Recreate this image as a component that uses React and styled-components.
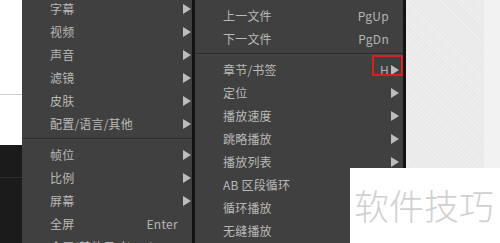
import React from "react";
import styled, { createGlobalStyle } from "styled-components";

const Global = createGlobalStyle`
  html, body { margin: 0; padding: 0; background: #ffffff; }
  body { font-family: "Noto Sans CJK SC", "Noto Sans", sans-serif; }
`;

const Screen = styled.div`
  position: relative;
  display: flex;
  width: 500px;
  height: 243px;
  overflow: hidden;
`;

const LeftStrip = styled.div`
  width: 22px;
  flex: none;
  display: flex;
  flex-direction: column;
`;

const StripBlock = styled.div`
  height: ${(p) => p.$h}px;
  flex: ${(p) => (p.$grow ? 1 : "none")};
  background: ${(p) => p.$bg};
  border-bottom: ${(p) => (p.$line ? `1px solid ${p.$line}` : "none")};
`;

const Menu = styled.div`
  flex: none;
  width: ${(p) => p.$w}px;
  background: #404040;
  border-right: 3px solid #141414;
  display: flex;
  flex-direction: column;
  padding-top: ${(p) => p.$pt}px;
  margin-top: ${(p) => p.$mt}px;
  height: 260px;
`;

const Row = styled.div`
  position: relative;
  height: 23px;
  flex: none;
  display: grid;
  grid-template-columns: 1fr auto 14px;
  align-items: center;
  padding-left: 28px;
  color: #b9b9b9;
  font-size: 12px;
  line-height: 23px;
  white-space: nowrap;
`;

const Label = styled.span`
  letter-spacing: 0.2px;
`;

const Shortcut = styled.span`
  color: #b4b4b4;
  font-size: 12px;
  letter-spacing: 0.3px;
`;

const ArrowCell = styled.span`
  display: flex;
  justify-content: flex-end;
  align-items: center;
  padding-right: ${(p) => p.$pr}px;
`;

const Separator = styled.div`
  height: 8px;
  flex: none;
  box-sizing: border-box;
  padding-top: ${(p) => p.$off}px;
  &::before {
    content: "";
    display: block;
    height: 1px;
    background: #2a2a2a;
    border-bottom: 1px solid #474747;
  }
`;

const Annotation = styled.div`
  position: absolute;
  right: 0;
  top: -3px;
  width: 31px;
  height: 21px;
  box-sizing: border-box;
  border: 2px solid #d9201f;
  pointer-events: none;
`;

const RightPanel = styled.div`
  flex: 1;
  display: flex;
`;

const Paper = styled.div`
  width: 78px;
  flex: none;
  background: #e9e9e9;
  background-image: repeating-linear-gradient(
    45deg,
    rgba(255, 255, 255, 0.25) 0px,
    rgba(255, 255, 255, 0.25) 1px,
    transparent 1px,
    transparent 3px
  );
`;

const Margin = styled.div`
  flex: 1;
  background: #f2f2f2;
`;

const Watermark = styled.div`
  position: absolute;
  left: 350px;
  top: 168px;
  width: 150px;
  height: 75px;
  background: #ffffff;
  box-sizing: border-box;
  padding: 19px 0 0 4px;
  font-family: "Noto Sans CJK SC", sans-serif;
  font-weight: 300;
  font-size: 35px;
  line-height: 36px;
  color: #d0d0d0;
  white-space: nowrap;
`;

const Arrow = () => (
  <svg width="8" height="10" viewBox="0 0 8 10">
    <polygon points="0,0 8,5 0,10" fill="#bdbdbd" />
  </svg>
);

const menu1 = [
  { label: "字幕", sub: true },
  { label: "视频", sub: true },
  { label: "声音", sub: true },
  { label: "滤镜", sub: true },
  { label: "皮肤", sub: true },
  { label: "配置/语言/其他", sub: true },
  { sep: true },
  { label: "帧位", sub: true },
  { label: "比例", sub: true },
  { label: "屏幕", sub: true },
  { label: "全屏", key: "Enter" },
  { label: "全屏(其他尺寸)", key: "Ctrl+Enter" },
];

const menu2 = [
  { label: "上一文件", key: "PgUp" },
  { label: "下一文件", key: "PgDn" },
  { sep: true },
  { label: "章节/书签", key: "H", sub: true, mark: true },
  { label: "定位", sub: true },
  { label: "播放速度", sub: true },
  { label: "跳略播放", sub: true },
  { label: "播放列表", sub: true },
  { label: "AB 区段循环" },
  { label: "循环播放" },
  { label: "无缝播放" },
];

const MenuList = ({ items, w, pt, mt, pr, sepOff }) => (
  <Menu $w={w} $pt={pt} $mt={mt}>
    {items.map((it, i) =>
      it.sep ? (
        <Separator key={i} $off={sepOff} />
      ) : (
        <Row key={i}>
          <Label>{it.label}</Label>
          <Shortcut>{it.key || ""}</Shortcut>
          <ArrowCell $pr={pr}>{it.sub ? <Arrow /> : null}</ArrowCell>
          {it.mark ? <Annotation /> : null}
        </Row>
      )
    )}
  </Menu>
);

export default function App() {
  return (
    <>
      <Global />
      <Screen>
        <LeftStrip>
          <StripBlock $h={94} $bg="#ffffff" $line="#cfcfcf" />
          <StripBlock $h={50} $bg="#ffffff" />
          <StripBlock $h={32} $bg="#1b1b1b" $line="#2e2e2e" />
          <StripBlock $grow $bg="#1b1b1b" />
        </LeftStrip>
        <MenuList items={menu1} w={170} pt={0} mt={-3} pr={1} sepOff={3} />
        <MenuList items={menu2} w={208} pt={4} mt={0} pr={4} sepOff={3} />
        <RightPanel>
          <Paper />
          <Margin />
        </RightPanel>
        <Watermark>软件技巧</Watermark>
      </Screen>
    </>
  );
}
